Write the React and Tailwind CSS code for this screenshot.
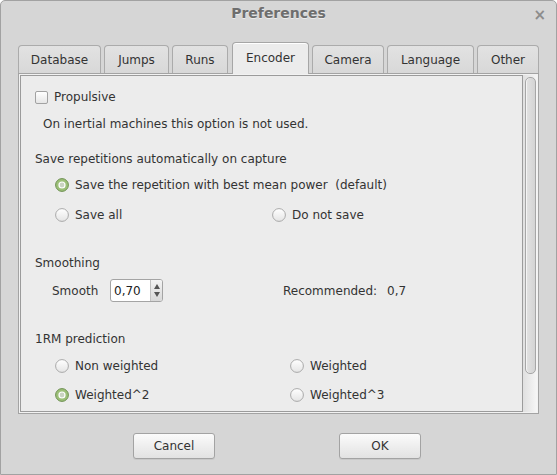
import React from "react";

function Radio({ checked, id }) {
  if (checked) {
    return (
      <svg width="14" height="14" viewBox="0 0 14 14" className="shrink-0">
        <circle cx="7" cy="7" r="6.4" fill="#9cbf78" stroke="#6f9153" strokeWidth="1" />
        <circle cx="7" cy="7" r="3.6" fill="#ffffff" />
        <circle cx="7" cy="7" r="2.4" fill="#c9d3c1" />
      </svg>
    );
  }
  return (
    <svg width="14" height="14" viewBox="0 0 14 14" className="shrink-0">
      <defs>
        <linearGradient id={id} x1="0" y1="0" x2="0" y2="1">
          <stop offset="0" stopColor="#ffffff" />
          <stop offset="1" stopColor="#e4e4e4" />
        </linearGradient>
      </defs>
      <circle cx="7" cy="7" r="6.4" fill={`url(#${id})`} stroke="#a9a9a9" strokeWidth="1" />
    </svg>
  );
}

function RadioItem({ checked, label, id, className = "" }) {
  return (
    <div className={`flex items-center gap-[6px] ${className}`}>
      <Radio checked={checked} id={id} />
      <span className="whitespace-pre">{label}</span>
    </div>
  );
}

const tabs = [
  { label: "Database", w: "w-[83px]", ml: "ml-0" },
  { label: "Jumps", w: "w-[65px]", ml: "ml-[3px]" },
  { label: "Runs", w: "w-[56px]", ml: "ml-[3px]" },
  { label: "Encoder", w: "w-[77px]", ml: "ml-[4px]", active: true },
  { label: "Camera", w: "w-[72px]", ml: "ml-[3px]" },
  { label: "Language", w: "w-[87px]", ml: "ml-[3px]" },
  { label: "Other", w: "w-[62px]", ml: "ml-[3px]" },
];

export default function App() {
  return (
    <div className="w-[557px] h-[475px] bg-[#d6d6d6] border border-[#a2a2a2] rounded-t-[5px] flex flex-col font-['DejaVu_Sans',sans-serif] text-[12px] text-[#333333] overflow-hidden">
      {/* Title bar */}
      <div className="relative h-[25px] shrink-0 flex items-center justify-center">
        <span className="font-bold text-[14px] text-[#6e6e6e] [text-shadow:0_1px_0_#ececec]">Preferences</span>
        <span className="absolute right-[10px] top-[3px] text-[15px] font-bold text-[#8c8c8c]">×</span>
      </div>

      {/* Notebook */}
      <div className="ml-[17px] mt-[16px] w-[521px] flex flex-col">
        <div className="flex items-end h-[31px] relative z-10">
          {tabs.map((t) =>
            t.active ? (
              <div
                key={t.label}
                className={`${t.w} ${t.ml} h-[32px] -mb-[1px] border border-b-0 border-[#a6a6a6] rounded-t-[4px] bg-[#ececec] shadow-[inset_0_1px_0_#ffffff] flex items-start justify-center pt-[6px]`}
              >
                {t.label}
              </div>
            ) : (
              <div
                key={t.label}
                className={`${t.w} ${t.ml} h-[28px] border border-b-0 border-[#ababab] rounded-t-[4px] bg-gradient-to-b from-[#e2e2e2] to-[#d8d8d8] flex items-start justify-center pt-[5px]`}
              >
                {t.label}
              </div>
            )
          )}
        </div>

        {/* Panel */}
        <div className="h-[341px] border border-[#a3a3a3] bg-[#f2f2f2] p-[1px] flex">
          <div className="flex-1 border border-[#9b9b9b] bg-[#ececec] flex flex-col">
            {/* Propulsive */}
            <div className="mt-[11px] h-[20px] pl-[14px] flex items-center gap-[6px]">
              <div className="w-[13px] h-[13px] rounded-[2px] border border-[#a2a2a2] bg-gradient-to-b from-[#ffffff] to-[#e6e6e6]" />
              <span>Propulsive</span>
            </div>
            <div className="mt-[7px] h-[20px] pl-[22px] flex items-center">
              On inertial machines this option is not used.
            </div>
            <div className="mt-[15px] h-[20px] pl-[14px] flex items-center">
              Save repetitions automatically on capture
            </div>
            <div className="mt-[6px] h-[20px] pl-[34px] flex items-center">
              <RadioItem checked label="Save the repetition with best mean power  (default)" />
            </div>
            <div className="mt-[10px] h-[20px] pl-[34px] flex items-center">
              <RadioItem label="Save all" id="g1" className="w-[217px]" />
              <RadioItem label="Do not save" id="g2" />
            </div>

            {/* Smoothing */}
            <div className="mt-[28px] h-[20px] pl-[14px] flex items-center">Smoothing</div>
            <div className="mt-[6px] h-[23px] pl-[31px] flex items-center">
              <span className="w-[58px]">Smooth</span>
              <div className="w-[53px] h-[23px] border border-[#a4a4a4] rounded-[3px] bg-white flex overflow-hidden">
                <div className="flex-1 pl-[3px] flex items-center text-[#222]">0,70</div>
                <div className="w-[12px] border-l border-[#c2c2c2] bg-gradient-to-b from-[#f4f4f4] to-[#d8d8d8] flex flex-col items-center justify-center gap-[3px]">
                  <svg width="6" height="5" viewBox="0 0 6 5"><path d="M3 0 L6 5 L0 5 Z" fill="#555" /></svg>
                  <svg width="6" height="5" viewBox="0 0 6 5"><path d="M0 0 L6 0 L3 5 Z" fill="#555" /></svg>
                </div>
              </div>
              <span className="ml-[120px] w-[104px]">Recommended:</span>
              <span>0,7</span>
            </div>

            {/* 1RM */}
            <div className="mt-[27px] h-[20px] pl-[14px] flex items-center">1RM prediction</div>
            <div className="mt-[7px] h-[20px] pl-[34px] flex items-center">
              <RadioItem label="Non weighted" id="g3" className="w-[235px]" />
              <RadioItem label="Weighted" id="g4" />
            </div>
            <div className="mt-[9px] h-[20px] pl-[34px] flex items-center">
              <RadioItem checked label="Weighted^2" className="w-[235px]" />
              <RadioItem label="Weighted^3" id="g5" />
            </div>
          </div>

          {/* Scrollbar */}
          <div className="w-[14px] bg-gradient-to-r from-[#e0e0e0] to-[#f6f6f6] flex justify-center pt-[2px]">
            <div className="w-[11px] h-[297px] border border-[#a6a6a6] rounded-[5px] bg-gradient-to-r from-[#e2e2e2] to-[#d4d4d4] shadow-[inset_1px_0_0_#f4f4f4]" />
          </div>
        </div>
      </div>

      {/* Buttons */}
      <div className="mt-[19px] flex pl-[132px]">
        <button className="w-[82px] h-[26px] border border-[#a3a3a3] rounded-[3px] bg-gradient-to-b from-[#fbfbfb] to-[#e2e2e2] shadow-[0_1px_0_#c8c8c8] text-[#333]">
          Cancel
        </button>
        <button className="ml-[124px] w-[82px] h-[26px] border border-[#a3a3a3] rounded-[3px] bg-gradient-to-b from-[#fbfbfb] to-[#e2e2e2] shadow-[0_1px_0_#c8c8c8] text-[#333]">
          OK
        </button>
      </div>
    </div>
  );
}
